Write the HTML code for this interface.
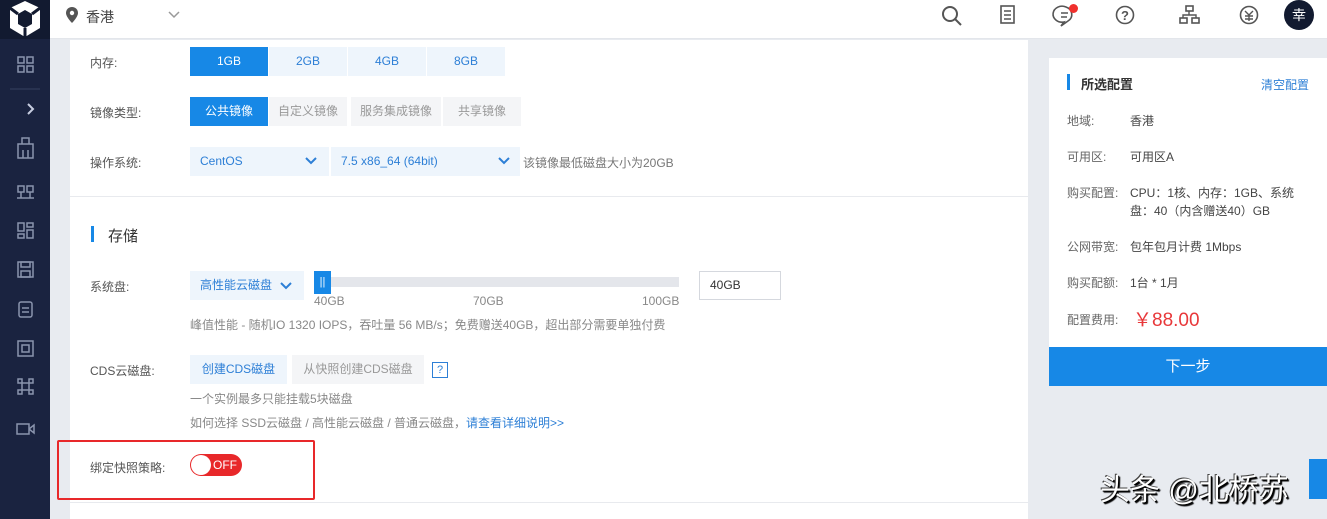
<!DOCTYPE html>
<html><head><meta charset="utf-8"><style>
*{margin:0;padding:0;box-sizing:border-box}
body{width:1327px;height:519px;overflow:hidden;background:#e8ebf0;font-family:"Liberation Sans","Noto Sans CJK SC",sans-serif;font-size:12px;color:#555;position:relative}
.a{position:absolute}
.side{left:0;top:0;width:50px;height:519px;background:#1a2340}
.logo{left:0;top:0;width:50px;height:39px;background:#121a30}
.top{left:50px;top:0;width:1277px;height:39px;background:#fff;border-bottom:1px solid #e3e6eb}
.main{left:70px;top:40px;width:958px;height:479px;background:#fff}
.lbl{font-size:12px;color:#555}
.btn{height:29px;line-height:29px;text-align:center;font-size:12px;background:#eef5fc;color:#2d7fd6}
.on{background:#1788e6;color:#fff}
.gray{background:#f4f5f7;color:#999}
</style></head><body>
<div class="a side"></div>
<div class="a logo"><svg width="50" height="39"><path d="M10 8 L25 1 L40 8 L40 28 L25 37 L10 28Z" fill="#fff"/><path d="M18 14 L25 10 L32 14 L32 24 L25 28 L18 24Z" fill="#121a30"/><path d="M10 8 L18 14 M40 8 L32 14 M25 28 L25 37" stroke="#121a30" stroke-width="3"/></svg></div>
<svg class="a" style="left:0;top:40px" width="50" height="479" fill="none" stroke="#8a94ad" stroke-width="1.5">
<rect x="18" y="17" width="6" height="6"/><rect x="27" y="17" width="6" height="6"/><rect x="18" y="26" width="6" height="6"/><rect x="27" y="26" width="6" height="6"/>
<line x1="10" y1="49" x2="40" y2="49" stroke="#2d3856"/>
<path d="M28 64 L33 69 L28 74" stroke="#c7cde0" stroke-width="2"/>
<rect x="18" y="104" width="15" height="14"/><path d="M22 104 V98 H29 V104 M23 110 V118 M28 110 V118"/>
<rect x="18" y="146" width="6" height="6"/><rect x="27" y="146" width="6" height="6"/><path d="M21 152 V158 M30 152 V158 M17 158 H34"/>
<rect x="18" y="183" width="6" height="8"/><rect x="27" y="183" width="6" height="4"/><rect x="18" y="194" width="6" height="4"/><rect x="27" y="190" width="6" height="8"/>
<rect x="18" y="222" width="15" height="15"/><rect x="21" y="222" width="9" height="5"/><rect x="21" y="231" width="9" height="6"/>
<rect x="19" y="262" width="13" height="15" rx="2"/><path d="M22 268 H29 M22 272 H29"/>
<rect x="18" y="301" width="15" height="15"/><rect x="22" y="305" width="7" height="7"/>
<path d="M22 343 H29 V350 H22Z M18 343 H22 V339 H18Z M29 339 H33 V343 H29Z M18 350 H22 V354 H18Z M29 350 H33 V354 H29Z"/>
<rect x="17" y="384" width="12" height="10"/><path d="M29 389 L34 385 V393 L29 389"/>
</svg>
<div class="a top"></div>
<svg class="a" style="left:66px;top:7px" width="12" height="16"><path d="M6 0 C2.5 0 0 2.5 0 6 C0 10 6 16 6 16 C6 16 12 10 12 6 C12 2.5 9.5 0 6 0Z" fill="#555"/><circle cx="6" cy="6" r="2.2" fill="#fff"/></svg>
<div class="a" style="left:86px;top:7px;font-size:14px;color:#444">香港</div>
<svg class="a" style="left:168px;top:10px" width="12" height="10"><path d="M1 2 L6 7 L11 2" stroke="#999" stroke-width="1.5" fill="none"/></svg>
<svg class="a" style="left:940px;top:3px" width="387" height="30" fill="none" stroke="#555" stroke-width="2">
<circle cx="10" cy="11" r="7"/><path d="M15 16 L21 22"/>
<rect x="61" y="3" width="13" height="17" stroke-width="1.6"/><path d="M64 8 H71 M64 12 H71 M64 16 H71" stroke-width="1.4"/>
<path d="M126 4 A9 8 0 1 0 124 19 L121 23 L128 18 A9 8 0 0 0 126 4Z" stroke-width="1.6"/><path d="M121 10 H128 M121 14 H127" stroke-width="1.4"/>
<circle cx="185" cy="12" r="8.5" stroke-width="1.6"/><text x="185" y="17" font-size="13" fill="#555" stroke="none" text-anchor="middle" font-family="Liberation Sans" font-weight="bold">?</text>
<rect x="246" y="3" width="7" height="5" stroke-width="1.6"/><rect x="240" y="15" width="7" height="5" stroke-width="1.6"/><rect x="252" y="15" width="7" height="5" stroke-width="1.6"/><path d="M249 8 V12 M243 15 V12 H256 V15" stroke-width="1.4"/>
<circle cx="309" cy="12" r="8.5" stroke-width="1.6"/><path d="M305 8 L309 12 L313 8 M309 12 V18 M305 13 H313 M305 16 H313" stroke-width="1.4"/>
</svg>
<div class="a" style="left:1069px;top:4px;width:9px;height:9px;border-radius:50%;background:#f0302d"></div>
<div class="a" style="left:1284px;top:0;width:30px;height:30px;border-radius:50%;background:#121a30;color:#fff;font-size:14px;line-height:30px;text-align:center">幸</div>

<div class="a main"></div>
<div class="a lbl" style="left:90px;top:54px">内存:</div>
<div class="a btn on" style="left:190px;top:47px;width:78px">1GB</div>
<div class="a btn" style="left:269px;top:47px;width:78px">2GB</div>
<div class="a btn" style="left:348px;top:47px;width:78px">4GB</div>
<div class="a btn" style="left:427px;top:47px;width:78px">8GB</div>
<div class="a lbl" style="left:90px;top:104px">镜像类型:</div>
<div class="a btn on" style="left:190px;top:97px;width:78px">公共镜像</div>
<div class="a btn gray" style="left:269px;top:97px;width:78px">自定义镜像</div>
<div class="a btn gray" style="left:351px;top:97px;width:90px">服务集成镜像</div>
<div class="a btn gray" style="left:443px;top:97px;width:78px">共享镜像</div>
<div class="a lbl" style="left:90px;top:154px">操作系统:</div>
<div class="a btn" style="left:190px;top:147px;width:139px;text-align:left;padding-left:10px">CentOS</div>
<div class="a btn" style="left:331px;top:147px;width:189px;text-align:left;padding-left:10px">7.5 x86_64 (64bit)</div>
<svg class="a" style="left:305px;top:157px" width="12" height="9"><path d="M1 1 L6 6 L11 1" stroke="#2d7fd6" stroke-width="2" fill="none"/></svg>
<svg class="a" style="left:498px;top:157px" width="12" height="9"><path d="M1 1 L6 6 L11 1" stroke="#2d7fd6" stroke-width="2" fill="none"/></svg>
<div class="a lbl" style="left:523px;top:154px;color:#777">该镜像最低磁盘大小为20GB</div>
<div class="a" style="left:70px;top:196px;width:958px;height:1px;background:#e8eaee"></div>
<div class="a" style="left:91px;top:226px;width:3px;height:16px;background:#1788e6"></div>
<div class="a" style="left:108px;top:225px;font-size:15px;color:#333">存储</div>
<div class="a lbl" style="left:90px;top:278px">系统盘:</div>
<div class="a btn" style="left:190px;top:271px;width:114px;text-align:left;padding-left:10px">高性能云磁盘</div>
<svg class="a" style="left:280px;top:282px" width="12" height="9"><path d="M1 1 L6 6 L11 1" stroke="#2d7fd6" stroke-width="2" fill="none"/></svg>
<div class="a" style="left:314px;top:277px;width:365px;height:10px;background:#e4e6eb"></div>
<div class="a" style="left:314px;top:271px;width:17px;height:23px;background:#1788e6;color:#fff;font-size:11px;text-align:center;line-height:23px">||</div>
<div class="a" style="left:314px;top:294px;color:#888">40GB</div>
<div class="a" style="left:473px;top:294px;color:#888">70GB</div>
<div class="a" style="left:642px;top:294px;color:#888">100GB</div>
<div class="a" style="left:699px;top:271px;width:82px;height:29px;border:1px solid #d5d8de;line-height:27px;padding-left:10px;color:#333">40GB</div>
<div class="a" style="left:190px;top:316px;color:#888">峰值性能 - 随机IO 1320 IOPS，吞吐量 56 MB/s；免费赠送40GB，超出部分需要单独付费</div>
<div class="a lbl" style="left:90px;top:362px">CDS云磁盘:</div>
<div class="a btn" style="left:190px;top:355px;width:97px">创建CDS磁盘</div>
<div class="a btn gray" style="left:292px;top:355px;width:132px">从快照创建CDS磁盘</div>
<div class="a" style="left:432px;top:362px;width:16px;height:16px;border:1px solid #2d7fd6;color:#2d7fd6;font-size:11px;text-align:center;line-height:14px">?</div>
<div class="a" style="left:190px;top:390px;color:#888">一个实例最多只能挂载5块磁盘</div>
<div class="a" style="left:190px;top:414px;color:#888">如何选择 SSD云磁盘 / 高性能云磁盘 / 普通云磁盘，<span style="color:#2d7fd6">请查看详细说明&gt;&gt;</span></div>
<div class="a" style="left:57px;top:440px;width:258px;height:60px;border:2px solid #e8282a;border-radius:2px"></div>
<div class="a lbl" style="left:90px;top:459px">绑定快照策略:</div>
<div class="a" style="left:190px;top:454px;width:52px;height:22px;border-radius:11px;background:#e8282a"></div>
<div class="a" style="left:191px;top:455px;width:20px;height:20px;border-radius:50%;background:#fff"></div>
<div class="a" style="left:213px;top:458px;color:#fff;font-size:12px">OFF</div>
<div class="a" style="left:70px;top:502px;width:958px;height:1px;background:#e8eaee"></div>

<div class="a" style="left:1049px;top:58px;width:278px;height:290px;background:#fff"></div>
<div class="a" style="left:1067px;top:74px;width:3px;height:16px;background:#1788e6"></div>
<div class="a" style="left:1081px;top:74px;font-size:13px;color:#333;font-weight:bold">所选配置</div>
<div class="a" style="left:1261px;top:76px;color:#2d7fd6">清空配置</div>
<div class="a" style="left:1067px;top:112px;color:#666">地域:</div><div class="a" style="left:1130px;top:112px;color:#444">香港</div>
<div class="a" style="left:1067px;top:148px;color:#666">可用区:</div><div class="a" style="left:1130px;top:148px;color:#444">可用区A</div>
<div class="a" style="left:1067px;top:184px;color:#666">购买配置:</div><div class="a" style="left:1130px;top:184px;color:#444;width:185px;line-height:18px">CPU：1核、内存：1GB、系统<br>盘：40（内含赠送40）GB</div>
<div class="a" style="left:1067px;top:238px;color:#666">公网带宽:</div><div class="a" style="left:1130px;top:238px;color:#444">包年包月计费 1Mbps</div>
<div class="a" style="left:1067px;top:274px;color:#666">购买配额:</div><div class="a" style="left:1130px;top:274px;color:#444">1台 * 1月</div>
<div class="a" style="left:1067px;top:311px;color:#666">配置费用:</div><div class="a" style="left:1133px;top:305px;color:#e8383a;font-size:19px">￥88.00</div>
<div class="a" style="left:1049px;top:347px;width:278px;height:39px;background:#1788e6;color:#fff;font-size:15px;text-align:center;line-height:39px">下一步</div>
<div class="a" style="left:1100px;top:465px;font-size:30px;color:#fff;text-shadow:1px 1px 0 #000,-1px -1px 0 #444,2px 2px 1px #000;white-space:nowrap">头条 @北桥苏</div>
<div class="a" style="left:1309px;top:459px;width:18px;height:40px;background:#1788e6"></div>
</body></html>
